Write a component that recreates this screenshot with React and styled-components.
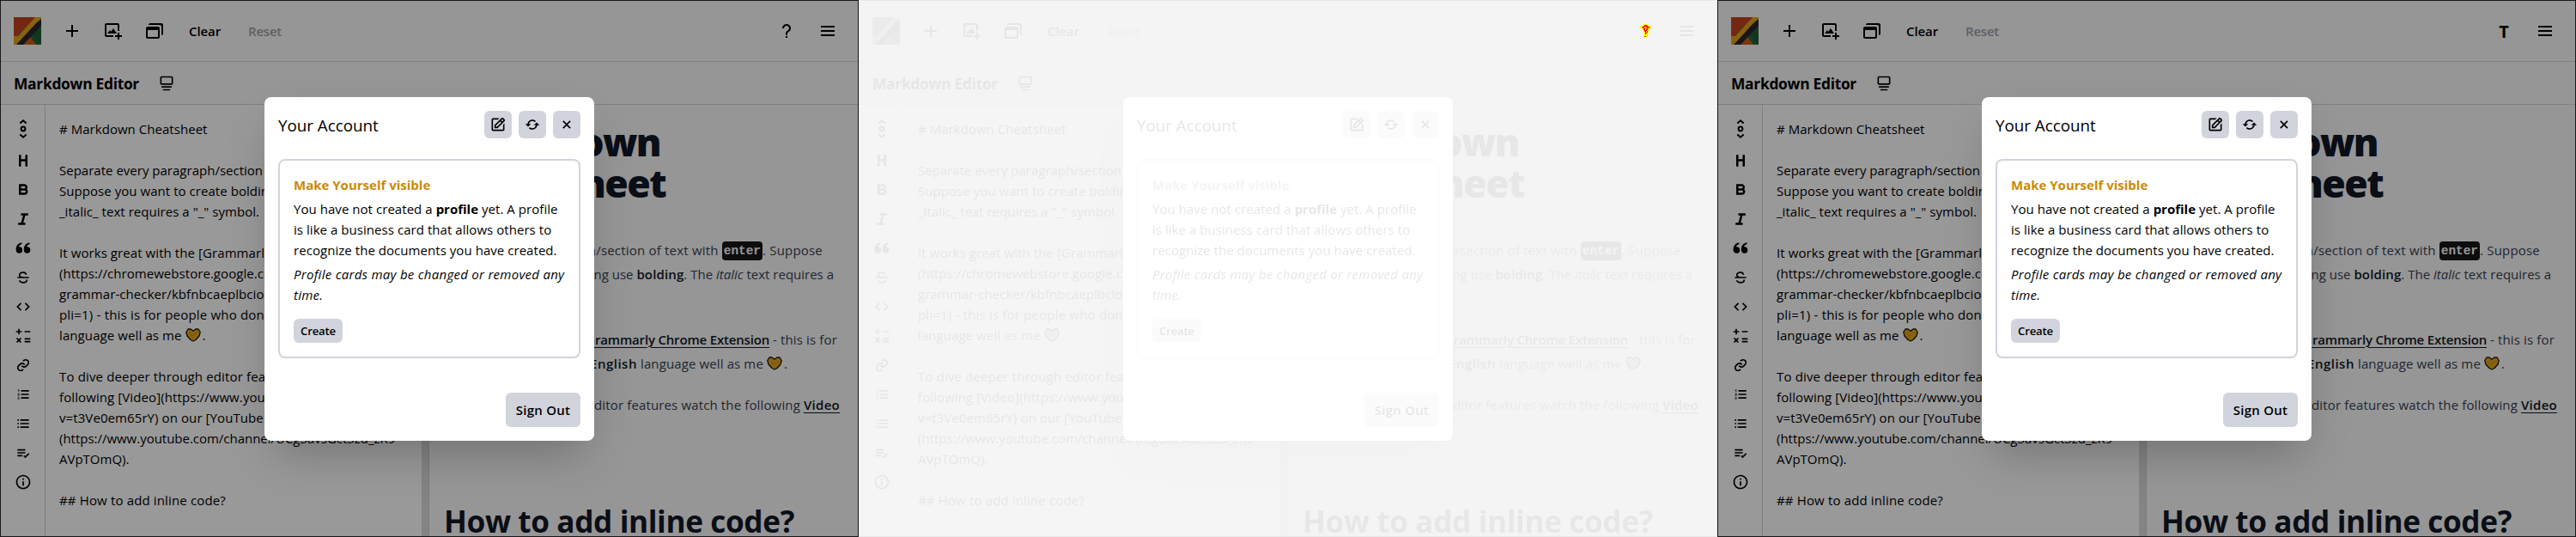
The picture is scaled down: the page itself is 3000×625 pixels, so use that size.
import React from 'react';
import styled, { createGlobalStyle, css } from 'styled-components';
import {
  BiPlus, BiImageAdd, BiWindows, BiMenu, BiHeading, BiBold, BiItalic,
  BiSolidQuoteAltLeft, BiStrikethrough, BiCode, BiMath, BiLink, BiListOl,
  BiListUl, BiListCheck, BiInfoCircle, BiEdit, BiRefresh, BiX, BiCollection,
  BiQuestionMark,
} from 'react-icons/bi';

const GlobalStyle = createGlobalStyle`
  * { box-sizing: border-box; }
  body {
    margin: 0;
    background: #fff;
    color: #000;
    font-family: "Open Sans", "Noto Sans", sans-serif;
    font-size: 15px;
    line-height: 24px;
  }
  svg { display: block; flex: none; }
`;

const Board = styled.main`
  display: flex;
  width: 3000px;
  height: 625px;
  overflow: hidden;
`;

const Slot = styled.section`
  position: relative;
  width: 1000px;
  height: 625px;
  overflow: hidden;
`;

const Screen = styled.div`
  position: relative;
  display: flex;
  flex-direction: column;
  width: 1000px;
  height: 625px;
  border: 1px solid #18181b;
  background: #fff;
  overflow: hidden;
  ${(p) => p.$faded && css`filter: grayscale(1) opacity(0.1);`}
`;

const Header = styled.header`
  display: flex;
  align-items: center;
  flex: none;
  height: 71px;
  padding: 0 15px;
  border-bottom: 1px solid #d4d4d4;
  background: #fafafa;
`;

const Actions = styled.div`
  display: flex;
  align-items: center;
  gap: 8px;
  margin-left: ${(p) => (p.$end ? 'auto' : '16px')};
`;

const IconSlot = styled.span`
  display: flex;
  align-items: center;
  justify-content: center;
  width: 40px;
  height: 40px;
`;

const Initial = styled.span`
  font-size: 20px;
  font-weight: 700;
  padding-top: 1px;
`;

const TextButton = styled.span`
  padding: 0 12px;
  font-weight: 600;
  letter-spacing: ${(p) => (p.$muted ? '-0.22px' : '-0.1px')};
  color: ${(p) => (p.$muted ? '#a0a0a5' : '#000')};
`;

const TitleBar = styled.div`
  display: flex;
  align-items: center;
  flex: none;
  height: 50px;
  padding-left: 15px;
  border-bottom: 1px solid #d4d4d4;
  background: #fafafa;

  svg { margin-left: 22px; transform: rotate(180deg); }
`;

const Title = styled.h1`
  margin: 0;
  padding-top: 1px;
  font-size: 17.4px;
  font-weight: 700;
  letter-spacing: -0.3px;
`;

const Workspace = styled.div`
  display: flex;
  flex: 1;
  min-height: 0;
`;

const Sidebar = styled.nav`
  display: flex;
  flex-direction: column;
  align-items: center;
  gap: 14px;
  flex: none;
  width: 52px;
  padding-top: 16px;
  border-right: 1px solid #d4d4d4;

  svg:first-child { margin-bottom: 1px; }
`;

const Editor = styled.div`
  flex: none;
  width: 438px;
  padding: 16px 0 0 16px;
  overflow: hidden;
`;

const SourceLine = styled.div`
  display: flex;
  align-items: center;
  height: 24px;
  white-space: pre;
  letter-spacing: ${(p) => p.$track}px;
`;

const Gutter = styled.div`
  flex: none;
  width: 9px;
  background: #dcdce0;
  border-right: 1px solid #cfcfd2;
`;

const Preview = styled.article`
  flex: 1;
  padding: 19px 0 0 16px;
  background: #fafafa;
  color: #374151;
  line-height: 28px;
  overflow: hidden;
`;

const DocHeading = styled.h1`
  margin: 0 0 40px;
  color: #111827;
  font-size: 44.5px;
  font-weight: 800;
  line-height: 48px;
  letter-spacing: -1.6px;
`;

const Paragraph = styled.p`
  margin: 0 0 20px;
`;

const DocLine = styled.span`
  display: flex;
  justify-content: flex-end;
  align-items: center;
  width: ${(p) => p.$w}px;
  height: ${(p) => (p.$tall ? 48 : 28)}px;
  white-space: pre;
  letter-spacing: ${(p) => p.$track}px;
`;

const SubHeading = styled.h2`
  margin: 73px 0 0 1px;
  color: #111827;
  font-size: 35.2px;
  font-weight: 700;
  line-height: 40px;
  letter-spacing: -0.4px;
  white-space: nowrap;
`;

const Strong = styled.strong`
  color: #111827;
  font-weight: 600;
  letter-spacing: ${(p) => p.$track || 0}px;
`;

const DocLink = styled(Strong)`
  text-decoration: underline;
  text-decoration-thickness: 1px;
  text-underline-offset: 3px;
`;

const Code = styled.code`
  height: 22px;
  padding: 0 2px;
  margin-top: 1px;
  border-radius: 4px;
  background: #171717;
  color: #fafafa;
  font: 700 14.4px/22px "Liberation Mono", monospace;
  letter-spacing: 0;
`;

const Backdrop = styled.div`
  position: absolute;
  inset: -1px;
  display: flex;
  align-items: center;
  justify-content: center;
  padding-top: 1px;
  background: rgba(0, 0, 0, 0.4);
`;

const Modal = styled.div`
  display: flex;
  flex-direction: column;
  width: 384px;
  height: 400px;
  padding: 16px;
  border-radius: 8px;
  background: #fff;
  box-shadow: 0 25px 50px -12px rgba(0, 0, 0, 0.25);
`;

const ModalHeader = styled.div`
  display: flex;
  align-items: center;
  gap: 8px;
  height: 32px;
  margin-bottom: 24px;
`;

const ModalTitle = styled.h2`
  margin: 0 auto 0 0;
  padding-top: 1px;
  font-size: 18.8px;
  font-weight: 400;
`;

const Button = styled.button`
  display: flex;
  align-items: center;
  justify-content: center;
  flex: none;
  padding: 0;
  border: 0;
  border-radius: 6px;
  background: #d1d4dc;
  color: #000;
  font-family: inherit;
  font-weight: 600;
  ${(p) => p.$kind === 'icon' && css`width: 32px; height: 32px;`}
  ${(p) => p.$kind === 'small' && css`
    width: 57px; height: 28px; margin-top: 16px; font-size: 13.2px; letter-spacing: -0.19px;
  `}
  ${(p) => p.$kind === 'large' && css`
    width: 87px; height: 40px; margin: auto 0 0 auto; font-size: 15px; letter-spacing: 0.25px;
  `}
`;

const Card = styled.div`
  height: 232px;
  padding: 16px;
  border: 2px solid #d1d4dc;
  border-radius: 8px;
  white-space: nowrap;
`;

const CardTitle = styled.h3`
  margin: 0 0 4px;
  color: #ca8a04;
  font-size: 15px;
  font-weight: 700;
`;

const CardText = styled.p`
  margin: 0 0 4px;
  letter-spacing: ${(p) => (p.$italic ? 0.27 : 0.05)}px;
  font-style: ${(p) => (p.$italic ? 'italic' : 'normal')};

  b { letter-spacing: 0; }
`;

const MarkLayer = styled.div`
  position: absolute;
  top: 28px;
  left: 910px;
`;

const Logo = () => (
  <svg width="32" height="32" viewBox="0 0 32 32">
    <rect width="32" height="32" fill="#23653a" />
    <path d="M0 0H26L0 26Z" fill="#c1441f" />
    <path d="M32 12V32L22 20Z" fill="#1f5a35" />
    <path d="M11 32L19 23L26 32Z" fill="#cf5a16" />
    <path d="M25 0H32V3L5 32H0V22H5Z" fill="#e3a31c" />
    <path d="M32 2V10L11 32H3L26 7Z" fill="#28262a" />
  </svg>
);

const HeartShape = styled.svg`
  margin-right: 2px;
`;

const Heart = () => (
  <HeartShape width="18" height="16" viewBox="0 0 18 16">
    <path
      d="M3 1L6 1L9 3.2L12 1H15L17.2 4.5L16 9L12 13.5L9 15L6 13.5L2 9L0.8 4.5Z"
      fill="#e2a51f" stroke="#1d1608" strokeWidth="1.3" strokeLinejoin="round"
    />
    <path d="M4 5L8 9L14 5" fill="none" stroke="#c98a12" strokeWidth="1" />
  </HeartShape>
);

const FocusIcon = () => (
  <svg width="20" height="24" viewBox="0 0 20 24" fill="none" stroke="currentColor" strokeWidth="2">
    <path d="M6.3 5.6L10 2.3L13.7 5.6M6.3 18.4L10 21.7L13.7 18.4" />
    <circle cx="10" cy="12" r="2.4" />
  </svg>
);

const MARK = [
  '....yyyyy....',
  '...yyrrryy...',
  'yyyyrrrrryyyy',
  'yyrrryyrrrryy',
  'yyyrryyyrrryy',
  '..yyrryrryy..',
  '...yrryrry...',
  '...yyrrryy...',
  '....yrryry...',
  '....yyryry...',
  '....yyrryy...',
  '....yyryy....',
  '....yyyyy....',
  '....yyyyy....',
  '....yrryy....',
  '....yyyyy....',
];

const ChangeMark = () => (
  <svg width="13" height="16" viewBox="0 0 13 16" shapeRendering="crispEdges">
    {MARK.flatMap((row, y) => [...row].map((c, x) => (c === '.' ? null : (
      <rect key={`${x}-${y}`} x={x} y={y} width="1" height="1" fill={c === 'y' ? '#ff0' : '#f00'} />
    ))))}
  </svg>
);

const TOOLS = [
  BiHeading, BiBold, BiItalic, BiSolidQuoteAltLeft, BiStrikethrough, BiCode,
  BiMath, BiLink, BiListOl, BiListUl, BiListCheck, BiInfoCircle,
];

const SOURCE = [
  ['# Markdown Cheatsheet', 0.04],
  [''],
  ['Separate every paragraph/section of text', 0.01],
  ['Suppose you want to create bolding use', 0.05],
  ['_italic_ text requires a "_" symbol.', 0.04],
  [''],
  ['It works great with the [Grammarly Chrome', 0.08],
  ['(https://chromewebstore.google.com/detail/', 0.05],
  ['grammar-checker/kbfnbcaeplbcioakkpcpgfk', 0.08],
  ["pli=1) - this is for people who don't know", 0.19],
  ['language well as me ', 0.1, true],
  [''],
  ['To dive deeper through editor features', 0.15],
  ['following [Video](https://www.youtube.com', 0.1],
  ['v=t3Ve0em65rY) on our [YouTube Channel]', 0.09],
  ['(https://www.youtube.com/channel/UCg3avsGct3zd_zR9-', -0.02],
  ['AVpTOmQ).', 0],
  [''],
  ['## How to add inline code?', 0.15],
];

function AccountModal() {
  return (
    <Modal>
      <ModalHeader>
        <ModalTitle>Your Account</ModalTitle>
        <Button $kind="icon"><BiEdit size={20} /></Button>
        <Button $kind="icon"><BiRefresh size={20} /></Button>
        <Button $kind="icon"><BiX size={20} /></Button>
      </ModalHeader>
      <Card>
        <CardTitle>Make Yourself visible</CardTitle>
        <CardText>
          You have not created a <b>profile</b> yet. A profile<br />
          is like a business card that allows others to<br />
          recognize the documents you have created.
        </CardText>
        <CardText $italic>
          Profile cards may be changed or removed any<br />time.
        </CardText>
        <Button $kind="small">Create</Button>
      </Card>
      <Button $kind="large">Sign Out</Button>
    </Modal>
  );
}

function DocPreview() {
  return (
    <Preview>
      <DocHeading>
        <DocLine $w={253} $tall $track={-1.6}>Markdown</DocLine>
        <DocLine $w={259} $tall $track={-1.6}>Cheatsheet</DocLine>
      </DocHeading>
      <Paragraph>
        <DocLine $w={442} $track={0.2}>
          <span>Separate every paragraph/section of text with </span>
          <Code>enter</Code>
          <span>. Suppose</span>
        </DocLine>
        <DocLine $w={455} $track={0}>
          <span>you want to create bolding use <Strong $track={0.13}>bolding</Strong>. The <i>italic</i> text requires a</span>
        </DocLine>
        <DocLine $w={76} $track={0}>"_" symbol.</DocLine>
      </Paragraph>
      <Paragraph>
        <DocLine $w={459} $track={0.14}>
          <span>works great with the <DocLink $track={-0.18}>Grammarly Chrome Extension</DocLink> - this is for</span>
        </DocLine>
        <DocLine $w={401} $track={0.12}>
          <span>who don't know <Strong $track={0.5}>English</Strong> language well as me </span>
          <Heart />
          <span>.</span>
        </DocLine>
      </Paragraph>
      <Paragraph>
        <DocLine $w={462} $track={0.14}>
          <span>To dive deeper through editor features watch the following <DocLink $track={0.27}>Video</DocLink></span>
        </DocLine>
        <DocLine $w={177} $track={0}>
          <span>on our <DocLink>YouTube Channel</DocLink>.</span>
        </DocLine>
      </Paragraph>
      <SubHeading>How to add inline code?</SubHeading>
    </Preview>
  );
}

function EditorScreen({ profile, faded }) {
  return (
    <Screen $faded={faded}>
      <Header>
        <Logo />
        <Actions>
          <IconSlot><BiPlus size={24} /></IconSlot>
          <IconSlot><BiImageAdd size={24} /></IconSlot>
          <IconSlot><BiWindows size={24} /></IconSlot>
          <TextButton>Clear</TextButton>
          <TextButton $muted>Reset</TextButton>
        </Actions>
        <Actions $end>
          <IconSlot>{profile}</IconSlot>
          <IconSlot><BiMenu size={24} /></IconSlot>
        </Actions>
      </Header>
      <TitleBar>
        <Title>Markdown Editor</Title>
        <BiCollection size={20} />
      </TitleBar>
      <Workspace>
        <Sidebar>
          <FocusIcon />
          {TOOLS.map((Tool, i) => <Tool key={i} size={20} />)}
        </Sidebar>
        <Editor>
          {SOURCE.map(([text, track = 0, heart], i) => (
            <SourceLine key={i} $track={track}>
              <span>{text}</span>
              {heart && <><Heart /><span>.</span></>}
            </SourceLine>
          ))}
        </Editor>
        <Gutter />
        <DocPreview />
      </Workspace>
      <Backdrop><AccountModal /></Backdrop>
    </Screen>
  );
}

export default function App() {
  return (
    <>
      <GlobalStyle />
      <Board>
        <Slot><EditorScreen profile={<BiQuestionMark size={24} />} /></Slot>
        <Slot>
          <EditorScreen faded />
          <MarkLayer><ChangeMark /></MarkLayer>
        </Slot>
        <Slot><EditorScreen profile={<Initial>T</Initial>} /></Slot>
      </Board>
    </>
  );
}
